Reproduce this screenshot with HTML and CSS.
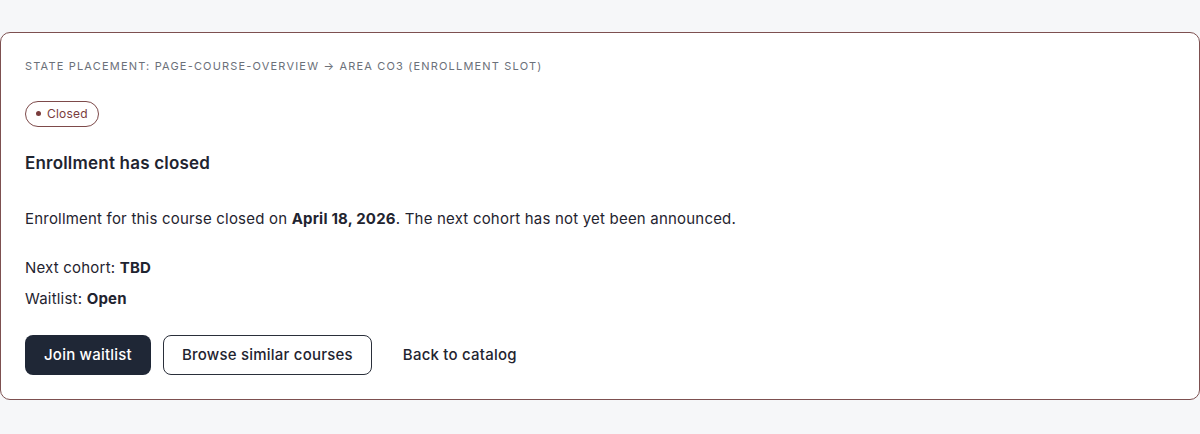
FILE: index.html
```html
<!DOCTYPE html>
<html lang="en">
<head>
    <meta charset="UTF-8">
    <meta name="viewport" content="width=device-width, initial-scale=1.0">
    <title>Enrollment closed</title>
    <link rel="stylesheet" href="styles.css">
</head>
<body>
    <section class="enroll-card">
        <div class="placement">State placement: page-course-overview → Area CO3 (enrollment slot)</div>

        <span class="badge"><span class="badge-dot"></span>Closed</span>

        <h2 class="title">Enrollment has closed</h2>

        <p class="summary">Enrollment for this course closed on <strong>April 18, 2026</strong>. The next cohort has not yet been announced.</p>

        <ul class="facts">
            <li>Next cohort: <strong>TBD</strong></li>
            <li>Waitlist: <strong>Open</strong></li>
        </ul>

        <div class="actions">
            <button class="btn btn-primary">Join waitlist</button>
            <button class="btn btn-outline">Browse similar courses</button>
            <button class="btn btn-link">Back to catalog</button>
        </div>
    </section>
</body>
</html>
```

FILE: styles.css
```css
body {
    margin: 0;
    padding: 32px 0 0;
    background: #f6f7f9;
    font-family: Inter, "Noto Sans", sans-serif;
    color: #1f2430;
}
.enroll-card {
    background: #fff;
    border: 1px solid #7d5050;
    border-radius: 10px;
    padding: 24px;
}
.placement {
    font-size: 11px;
    line-height: 16px;
    letter-spacing: 1.18px;
    text-transform: uppercase;
    color: #6b7079;
    margin-bottom: 26px;
    padding-top: 1px;
}
.badge {
    display: inline-flex;
    align-items: center;
    gap: 6px;
    padding: 4px 10px;
    font-size: 12px;
    line-height: 16px;
    letter-spacing: 0.2px;
    color: #7a3c3c;
    border: 1px solid #7d4a4a;
    border-radius: 999px;
}
.badge-dot {
    width: 5px;
    height: 5px;
    border-radius: 50%;
    background: #7a3c3c;
}
.title {
    margin: 24px 0 0;
    font-size: 17px;
    line-height: 24px;
    font-weight: 600;
    letter-spacing: 0.2px;
}
.summary {
    margin: 33px 0 0;
    font-size: 15px;
    line-height: 22px;
    letter-spacing: 0.2px;
}
.summary strong, .facts strong {
    font-weight: 700;
}
.facts {
    list-style: none;
    margin: 27px 0 0;
    padding: 0;
    font-size: 15px;
    line-height: 22px;
    letter-spacing: 0.2px;
}
.facts li + li {
    margin-top: 9px;
}
.actions {
    display: flex;
    gap: 12px;
    margin-top: 25px;
}
.btn {
    height: 40px;
    padding: 0 18px;
    font-family: inherit;
    font-size: 15px;
    font-weight: 500;
    letter-spacing: 0.22px;
    border-radius: 8px;
    border: 1px solid transparent;
    cursor: pointer;
}
.btn-primary {
    background: #1f2736;
    color: #fff;
}
.btn-outline {
    background: #fff;
    border-color: #2a2f3a;
    color: #1f2430;
}
.btn-link {
    background: transparent;
    color: #1f2430;
}
```
